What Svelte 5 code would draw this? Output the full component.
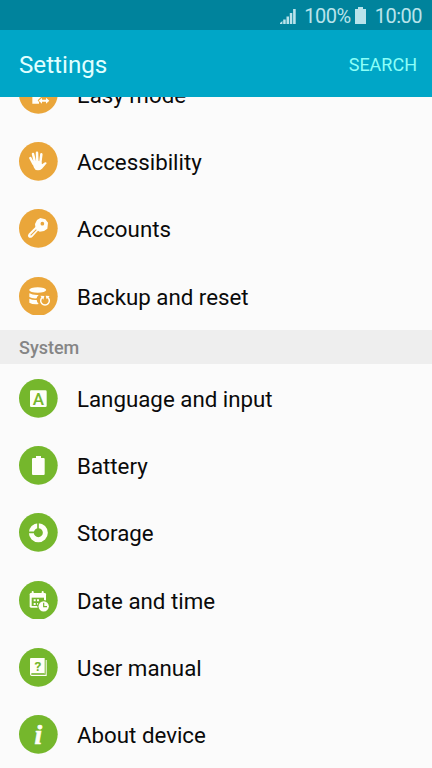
<script lang="ts">
	interface Item {
		icon: string;
		label: string;
	}

	const personal: Item[] = [
		{ icon: 'easy', label: 'Easy mode' },
		{ icon: 'hand', label: 'Accessibility' },
		{ icon: 'key', label: 'Accounts' },
		{ icon: 'backup', label: 'Backup and reset' }
	];

	const system: Item[] = [
		{ icon: 'language', label: 'Language and input' },
		{ icon: 'battery', label: 'Battery' },
		{ icon: 'storage', label: 'Storage' },
		{ icon: 'date', label: 'Date and time' },
		{ icon: 'manual', label: 'User manual' },
		{ icon: 'about', label: 'About device' }
	];
</script>

{#snippet row(item: Item)}
	<li class="row">
		<svg class="icon" viewBox="0 0 116 116" aria-hidden="true">
			<circle class="disc" cx="58" cy="58" r="58" />
			{#if item.icon === 'easy'}
				<path class="fill" d="M40 30h36v36H66l-10 10 4 5v5H40z" />
				<path class="fill" d="M59 77l10-9v6h12v-6l10 9-10 9v-6H69v6z" />
			{:else if item.icon === 'hand'}
				<path class="line" stroke-width="7.5" d="M34 48l9 17M42 36l6 25M54 32l1 27M67 37l-3 24" />
				<path class="fill" d="M39 61q13-8 28-2l2 8 9-6q4-1 5 3L69 80q-5 5-12 5-9 0-12-8z" />
			{:else if item.icon === 'key'}
				<path class="fill" d="M54 33l10-6 15 4 8 10-2 18-10 7-13 2-5-3-17 19q-7 5-12 0-3-5 1-10l20-20-1-9z" />
				<circle class="disc" cx="70" cy="44" r="5.5" />
				<path class="cut" stroke-width="3" d="M35 79l17-17" />
			{:else if item.icon === 'backup'}
				<ellipse class="fill" cx="56" cy="39" rx="25.5" ry="8.5" />
				<path class="fill" d="M31 49q10 6 28 5-6 5-6 10-14 1-22-4zM31 65q9 5 22 4 1 8 6 12-18 2-28-4z" />
				<path class="line" stroke-width="4.5" d="M71 60a13 13 0 1 0 14 0" />
				<path class="fill" d="M64 56l12 1-3 11zM92 57l-12-1 3 11z" />
			{:else if item.icon === 'language'}
				<rect class="fill" x="33" y="34" width="50" height="50" rx="4" />
				<text class="glyph letter" x="58" y="77" font-size="51">A</text>
			{:else if item.icon === 'battery'}
				<path class="fill" d="M51 30h15v6h8q3 0 3 3v45q0 3-3 3H42q-3 0-3-3V39q0-3 3-3h9z" />
			{:else if item.icon === 'storage'}
				<circle class="line" cx="58" cy="59" r="21" stroke-width="15" />
				<path class="cut" stroke-width="5" d="M57 27v24M26 58h24" />
			{:else if item.icon === 'date'}
				<rect class="fill" x="32" y="36" width="49" height="44" rx="4" />
				<path class="line" stroke-width="6" d="M41 33v7M71 33v7" />
				<path class="disc" d="M38 50h37v25H38z" />
				<path class="fill" d="M44 55h6v6h-6zM54 55h6v6h-6zM44 66h6v6h-6zM54 66h6v6h-6z" />
				<circle class="disc" cx="74" cy="76" r="19" />
				<circle class="fill" cx="74" cy="76" r="15.5" />
				<path class="cut" stroke-width="3.5" d="M74 65v12h10" />
			{:else if item.icon === 'manual'}
				<path class="fill" d="M36 30h41v48H37v2h43V36h3v48H38q-5 0-5-5V33q0-3 3-3z" />
				<path class="cut" stroke-width="3" d="M37 77h40" />
				<text class="glyph" x="57" y="68" font-size="41">?</text>
			{:else}
				<text class="info" x="58" y="86" font-size="82">i</text>
			{/if}
		</svg>
		<span class="label">{item.label}</span>
	</li>
{/snippet}

<div class="phone">
	<div class="status">
		<svg class="signal" viewBox="0 0 16 16" aria-hidden="true">
			<path d="M0 16v-1l2.4-2v3zM3.2 11.5h2.5V16H3.2zM6.5 8.5H9V16H6.5zM9.8 5h2.5v11H9.8zM13.1 1h2.6v15h-2.6z" />
		</svg>
		<span class="percent">100%</span>
		<svg class="charge" viewBox="0 0 11 17" aria-hidden="true">
			<path d="M3 0h5v2h3v15H0V2h3z" />
		</svg>
		<span class="clock">10:00</span>
	</div>

	<header class="bar">
		<h1>Settings</h1>
		<button class="search">SEARCH</button>
	</header>

	<main>
		<ul class="group personal">
			{#each personal as item}
				{@render row(item)}
			{/each}
		</ul>
		<h2>System</h2>
		<ul class="group system">
			{#each system as item}
				{@render row(item)}
			{/each}
		</ul>
	</main>
</div>

<style>
	:global(body) {
		margin: 0;
	}

	.phone {
		display: flex;
		flex-direction: column;
		width: 432px;
		height: 768px;
		overflow: hidden;
		background: #fbfbfb;
		font-family: Roboto, sans-serif;
	}

	.status {
		display: flex;
		align-items: center;
		justify-content: flex-end;
		flex: none;
		box-sizing: border-box;
		height: 30px;
		padding: 2px 10px 0 0;
		background: #00839c;
		color: #b9e3eb;
		font-size: 20px;
		letter-spacing: -0.5px;
		line-height: 28px;
	}

	.status svg {
		fill: #b9e3eb;
	}

	.signal {
		width: 16px;
		height: 16px;
		margin-right: 8px;
	}

	.charge {
		width: 11px;
		height: 17px;
		margin: 0 9px 2px 4px;
	}

	.bar {
		display: flex;
		align-items: center;
		justify-content: space-between;
		flex: none;
		box-sizing: border-box;
		height: 67px;
		padding: 2px 15px 0 19px;
		background: #00a6c7;
	}

	h1 {
		margin: 0;
		color: #e0ffff;
		font-size: 24.2px;
		font-weight: 400;
	}

	.search {
		padding: 0;
		border: none;
		background: none;
		color: #8cfff8;
		font-family: inherit;
		font-size: 18px;
	}

	main {
		flex: 1;
		min-height: 0;
		overflow: hidden;
	}

	.group {
		margin: 0;
		padding: 0;
		list-style: none;
	}

	.personal {
		margin-top: -36.2px;
		padding-bottom: 0.4px;
	}

	.system {
		padding-top: 0.9px;
	}

	.row {
		display: flex;
		align-items: center;
		height: 67.2px;
		padding-left: 19px;
	}

	.icon {
		flex: none;
		width: 38.7px;
		height: 38.7px;
		margin-right: 19.3px;
		color: #75b72c;
	}

	.personal .icon {
		color: #eaa63a;
	}

	.disc {
		fill: currentColor;
	}

	.fill {
		fill: #fffef8;
	}

	.line {
		fill: none;
		stroke: #fffef8;
		stroke-linecap: round;
	}

	.cut {
		fill: none;
		stroke: currentColor;
	}

	.glyph {
		fill: currentColor;
		font-weight: 700;
		text-anchor: middle;
	}

	.letter {
		font-weight: 500;
	}

	.info {
		fill: #fffef8;
		stroke: #fffef8;
		stroke-width: 2;
		font-family: 'Liberation Serif', serif;
		font-style: italic;
		font-weight: 700;
		text-anchor: middle;
	}

	.label {
		padding-top: 1.2px;
		color: #0a0a0a;
		font-size: 22.3px;
		line-height: 28px;
	}

	h2 {
		box-sizing: border-box;
		height: 34px;
		margin: 0;
		padding: 2px 0 0 19px;
		background: #eee;
		color: #858585;
		font-size: 18px;
		font-weight: 500;
		line-height: 32px;
	}
</style>
